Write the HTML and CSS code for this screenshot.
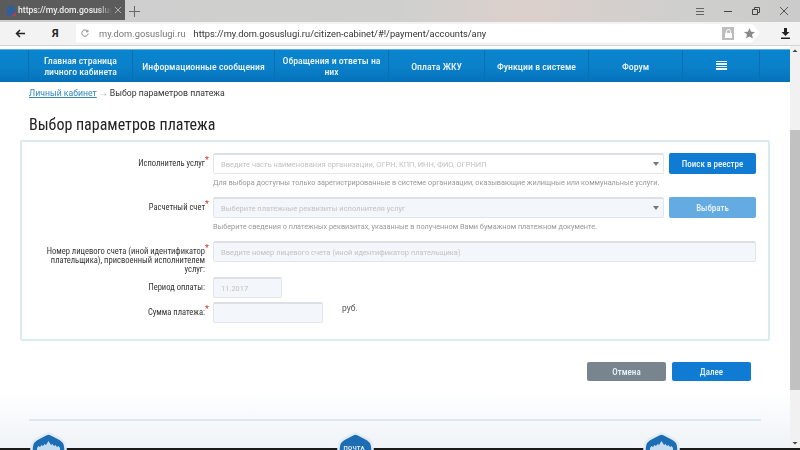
FILE: index.html
```html
<!DOCTYPE html>
<html>
	<head>
		<meta charset="utf-8" />
		<title>Выбор параметров платежа</title>
		<link rel="stylesheet" href="styles.css">
	</head>
	<body>
		<div class="tabs">
			<div class="tab">
				<svg class="favicon" width="13" height="14" viewBox="0 0 13 14"><path d="M2 13V5l4-3 4 3v8z" fill="#2f5f9e"/><path d="M6 13l5-4v4z" fill="#b5404a"/></svg>
				<span class="tab-title">https://my.dom.gosuslugi</span>
				<svg width="8" height="8" viewBox="0 0 9 9"><path d="M1 1l7 7M8 1L1 8" stroke="#bbb" fill="none"/></svg>
			</div>
			<svg class="new-tab" width="11" height="11" viewBox="0 0 11 11"><path d="M5.5 0v11M0 5.5h11" stroke="#666" fill="none"/></svg>
			<div class="window-btns">
				<svg width="10" height="9" viewBox="0 0 10 9"><path d="M1 1.5h8M1 4.5h8M1 7.5h8" stroke="#666" fill="none"/></svg>
				<svg width="10" height="9" viewBox="0 0 10 9"><path d="M1 4.5h8" stroke="#444" fill="none"/></svg>
				<svg width="10" height="10" viewBox="0 0 10 10"><path d="M1.5 3.5h5v5h-5zM3.5 3V1.5h5v5H7" stroke="#444" fill="none"/></svg>
				<svg width="10" height="10" viewBox="0 0 10 10"><path d="M1 1l8 8M9 1L1 9" stroke="#555" fill="none"/></svg>
			</div>
		</div>

		<div class="toolbar">
			<svg class="back" width="10" height="9" viewBox="0 0 10 9"><path d="M10 4.5H1.5M5 1L1.5 4.5 5 8" stroke="#222" stroke-width="1.5" fill="none"/></svg>
			<span class="ya">Я</span>
			<div class="address">
				<svg class="reload" width="8" height="8" viewBox="0 0 8 8"><path d="M6.8 2.5A3.2 3.2 0 1 0 7.2 4.5M6.9.8v2H5" stroke="#888" fill="none"/></svg>
				<span class="host">my.dom.gosuslugi.ru</span>
				<span class="url">https://my.dom.gosuslugi.ru/citizen-cabinet/#!/payment/accounts/any</span>
				<span class="lock"><svg width="7" height="9" viewBox="0 0 7 9"><path d="M1.5 4V2.5a2 2 0 0 1 4 0V4" stroke="#fff" fill="none"/><rect y="4" width="7" height="5" fill="#fff"/></svg></span>
				<svg class="star" width="11" height="11" viewBox="0 0 11 11"><path d="M5.5 0l1.6 3.7 3.9.3-3 2.6.9 3.9-3.4-2.1-3.4 2.1.9-3.900-3-2.600 3.900-.3z" fill="#8a8a8a"/></svg>
			</div>
			<svg class="download" width="9" height="11" viewBox="0 0 9 11"><path d="M3 0h3v4h2.5L4.5 8 .5 4H3zM0 9.500h9V11H0z" fill="#222"/></svg>
		</div>

		<div class="window">
			<div class="page">
				<nav class="nav">
					<span></span>
					<a>Главная страница личного кабинета</a>
					<a>Информационные сообщения</a>
					<a>Обращения и ответы на них</a>
					<a>Оплата ЖКУ</a>
					<a>Функции в системе</a>
					<a>Форум</a>
					<a><span class="burger"></span></a>
					<span></span>
				</nav>

				<div class="breadcrumb"><a>Личный кабинет</a> <span class="arrow">→</span> Выбор параметров платежа</div>
				<h1>Выбор параметров платежа</h1>

				<form class="box">
					<div class="row row-first">
						<label>Исполнитель услуг<i>*</i></label>
						<div class="field">
							<div class="combo"><div class="input select">Введите часть наименования организации, ОГРН, КПП, ИНН, ФИО, ОГРНИП</div><button type="button" class="btn">Поиск в реестре</button></div>
							<p class="hint">Для выбора доступны только зарегистрированные в системе организации, оказывающие жилищные или коммунальные услуги.</p>
						</div>
					</div>
					<div class="row row-second">
						<label>Расчетный счет<i>*</i></label>
						<div class="field">
							<div class="combo"><div class="input select disabled">Выберите платежные реквизиты исполнителя услуг</div><button type="button" class="btn btn-off">Выбрать</button></div>
							<p class="hint">Выберите сведения о платежных реквизитах, указанные в полученном Вами бумажном платежном документе.</p>
						</div>
					</div>
					<div class="row row-third">
						<label>Номер лицевого счета (иной идентификатор<i>*</i><br>плательщика), присвоенный исполнителем<br>услуг:</label>
						<div class="field"><div class="input disabled">Введите номер лицевого счета (иной идентификатор плательщика)</div></div>
					</div>
					<div class="row row-period">
						<label>Период оплаты:</label>
						<div class="field"><div class="input disabled period">11.2017</div></div>
					</div>
					<div class="row">
						<label>Сумма платежа:<i>*</i></label>
						<div class="field sum-field"><div class="input disabled sum"></div><span class="rub">руб.</span></div>
					</div>
				</form>

				<div class="actions">
					<button type="button" class="btn btn-big btn-grey">Отмена</button>
					<button type="button" class="btn btn-big">Далее</button>
				</div>

				<footer class="footer">
					<div class="logos">
						<div class="logo-wrap">
							<svg width="37" height="36" viewBox="0 0 37 36"><path d="M18.5 1.500c3 0 5 2.500 9 4 4 1.500 8 4 8 11V36h-34V16.500c0-7 4-9.500 8-11 4-1.500 6-4 9-4z" fill="#1c6db4" stroke="#e3ecf4" stroke-width="2.500"/><path d="M7 16l1.500-2 1.500 1 1.500-2 1.500 1 1.500-2 1.500 1 2.500-4 2.500 4 1.500-1 1.500 2 1.500-1 1.500 2 1.500-1 1.500 2v2H7z" fill="#c4dcf0"/></svg>
						</div>
						<div class="logo-wrap">
							<svg width="37" height="36" viewBox="0 0 37 36"><path d="M18.5 1.500c3 0 5 2.500 9 4 4 1.500 8 4 8 11V36h-34V16.500c0-7 4-9.500 8-11 4-1.500 6-4 9-4z" fill="#1c6db4" stroke="#e3ecf4" stroke-width="2.500"/></svg>
							<span class="logo-text">ПОЧТА</span>
						</div>
						<div class="logo-wrap">
							<svg width="37" height="36" viewBox="0 0 37 36"><path d="M18.5 1.500c3 0 5 2.500 9 4 4 1.500 8 4 8 11V36h-34V16.500c0-7 4-9.500 8-11 4-1.500 6-4 9-4z" fill="#1c6db4" stroke="#e3ecf4" stroke-width="2.500"/><path d="M7 16l1.500-2 1.500 1 1.500-2 1.500 1 1.500-2 1.500 1 2.500-4 2.500 4 1.500-1 1.500 2 1.500-1 1.500 2 1.500-1 1.500 2v2H7z" fill="#c4dcf0"/></svg>
						</div>
					</div>
				</footer>
			</div>
			<div class="scrollbar">
				<svg width="10" height="10" viewBox="0 0 10 10"><path d="M2.5 6L5 3.500 7.500 6z" fill="#444"/></svg>
				<div class="thumb"></div>
				<svg width="10" height="10" viewBox="0 0 10 10"><path d="M2.5 4L5 6.500 7.500 4z" fill="#444"/></svg>
			</div>
		</div>
		<div class="taskbar"></div>
	</body>
</html>
```

FILE: styles.css
```css
* {
	box-sizing: border-box;
}

html,
body {
	margin: 0;
	height: 450px;
	overflow: hidden;
}

body {
	font-family: Roboto, "Liberation Sans", sans-serif;
	background-color: #fff;
	color: #333;
	display: flex;
	flex-direction: column;
	filter: blur(0.3px);
}

/* Browser chrome */
.tabs {
	height: 22px;
	display: flex;
	align-items: center;
	background: linear-gradient(90deg, #cdcecd 0%, #cfd0ce 50%, #dcd0cc 65%, #cfcfcd 85%, #cbcbcb 100%);
}

.tab {
	width: 125px;
	height: 20px;
	padding-left: 5px;
	display: flex;
	align-items: center;
	background-color: #5b5b5b;
	color: #eee;
	font-size: 8.6px;
	font-weight: 500;
	margin-bottom: 2px;
}

.tab-title {
	width: 94px;
	margin-right: 2px;
	overflow: hidden;
	white-space: nowrap;
	-webkit-mask-image: linear-gradient(90deg, #000 85%, transparent 100%);
	mask-image: linear-gradient(90deg, #000 85%, transparent 100%);
}

.new-tab {
	margin-left: 4px;
}

.window-btns {
	margin-left: auto;
	display: flex;
	align-items: center;
	width: 105px;
	padding-right: 11px;
	justify-content: space-between;
}

.toolbar {
	height: 24px;
	display: flex;
	align-items: center;
	background-color: #f3f3f3;
	border-bottom: 1px solid #d4d4d4;
}

.back {
	margin-left: 15px;
}

.ya {
	margin-left: 27px;
	width: 24px;
	font-size: 11px;
	font-weight: 700;
	color: #222;
}

.address {
	width: 684px;
	height: 19px;
	margin-bottom: 1px;
	display: flex;
	align-items: center;
	background-color: #fff;
	clip-path: polygon(0 0, 98.8% 0, 100% 50%, 98.8% 100%, 0 100%);
	font-size: 9.3px;
}

.reload {
	margin-left: 5px;
}

.host {
	margin-left: 10px;
	color: #777;
}

.url {
	margin-left: 8px;
	color: #333;
}

.lock {
	margin-left: auto;
	width: 12px;
	height: 13px;
	background-color: #bdbdbd;
	display: flex;
	align-items: center;
	justify-content: center;
}

.star {
	margin: 0 5px 0 10px;
}

.download {
	margin-left: 21px;
}

/* Page */
.window {
	flex: 1;
	display: flex;
	min-height: 0;
}

.page {
	flex: 1;
	padding-top: 3px;
	min-width: 0;
	background: linear-gradient(180deg, #fff 0, #fff 345px, #eff3f7 402px);
}

.nav {
	height: 33px;
	display: grid;
	grid-template-columns: 29px 104px 142px 114px 96px 104px 94px 77px 1fr;
	grid-template-rows: 32px;
	background: linear-gradient(180deg, #0a84cf 0%, #0a80c9 55%, #0472ba 100%);
	border-top: 1px solid #5fb3e0;
}

.nav > * {
	display: flex;
	align-items: center;
	justify-content: center;
	padding: 0 6px;
	text-align: center;
	color: #e8f3fa;
	font-stretch: 75%;
	font-size: 9.8px;
	font-weight: 500;
	line-height: 11px;
	border-right: 1px solid #0a6fb0;
}

.nav > span:last-child {
	border-right: none;
}

.burger {
	width: 11px;
	height: 10px;
	background: repeating-linear-gradient(180deg, #f2f7fb 0, #f2f7fb 1.5px, #0a7cc4 1.5px, #0a7cc4 2.5px);
}

.breadcrumb {
	margin: 5px 0 0 29px;
	font-size: 8.7px;
	line-height: 12px;
	color: #333;
}

.breadcrumb a {
	color: #2f86b8;
	text-decoration: underline;
}

.arrow {
	color: #999;
}

h1 {
	margin: 16px 0 0 29px;
	font-stretch: 75%;
	font-size: 16px;
	font-weight: 400;
	line-height: 20px;
	color: #222;
}

.box {
	margin: 5px 20px 0;
	width: 750px;
	height: 201px;
	padding: 11px 12px 0 0;
	border: 2px solid #dbe9f1;
	border-radius: 2px;
}

.row {
	display: grid;
	grid-template-columns: 191px 1fr;
}

.row-first,
.row-second {
	height: 44px;
}

.row-third {
	height: 36px;
}

.row-period {
	height: 25px;
}

label {
	position: relative;
	padding: 6px 8px 0 0;
	text-align: right;
	white-space: nowrap;
	font-stretch: 75%;
	font-size: 8.5px;
	line-height: 9px;
	color: #333;
}

label i {
	position: absolute;
	margin-top: -3px;
	color: #c0392b;
	font-style: normal;
	font-size: 9px;
}

.combo {
	display: flex;
	gap: 5px;
}

.input {
	flex: 1;
	height: 21px;
	padding-left: 7px;
	display: flex;
	align-items: center;
	border: 1px solid #e2e6ea;
	border-top: 2px solid #dcdfe3;
	border-radius: 2px;
	background-color: #fff;
	color: #c2c2c2;
	font-size: 7.5px;
}

.select {
	position: relative;
}

/* dropdown caret */
.select::after {
	content: "";
	position: absolute;
	right: 4px;
	top: 7px;
	border: 3.5px solid transparent;
	border-top: 4px solid #777;
	border-bottom: none;
}

.disabled {
	background-color: #f3f6fa;
}

.period {
	width: 69px;
	flex: none;
}

.sum {
	width: 110px;
	flex: none;
}

.sum-field {
	display: flex;
}

.rub {
	margin: 1px 0 0 19px;
	font-size: 8.5px;
	color: #555;
}

.hint {
	margin: 3px 0 0;
	font-size: 7.3px;
	line-height: 11px;
	color: #999;
}

.btn {
	width: 87px;
	height: 21px;
	padding: 0;
	border: none;
	border-radius: 2px;
	background-color: #0f7bd2;
	color: #e8f3fb;
	font-family: inherit;
	font-stretch: 75%;
	font-size: 9px;
	font-weight: 500;
}

.btn-off {
	background-color: #64abe2;
}

.actions {
	margin: 21px 39px 0 0;
	display: flex;
	justify-content: flex-end;
	gap: 6px;
}

.btn-big {
	width: 79px;
	height: 19px;
}

.btn-grey {
	background-color: #78858f;
}

.footer {
	margin: 38px 29px 0;
	border-top: 2px solid #dde8ee;
	height: 40px;
	overflow: hidden;
}

.logos {
	padding: 11px 81px 0 1px;
	display: flex;
	justify-content: space-between;
}

.logo-wrap {
	position: relative;
	height: 36px;
}

.logo-text {
	position: absolute;
	left: 7px;
	top: 12px;
	color: #e6f0f8;
	font-size: 6px;
	font-weight: 700;
	letter-spacing: 0.3px;
}

.scrollbar {
	width: 10px;
	display: flex;
	flex-direction: column;
	background-color: #f1f1f1;
}

.thumb {
	height: 260px;
	margin-top: 74px;
	margin-bottom: auto;
	background-color: #c1c1c1;
}

.taskbar {
	height: 2px;
	background-color: #1a1a1a;
}
```
